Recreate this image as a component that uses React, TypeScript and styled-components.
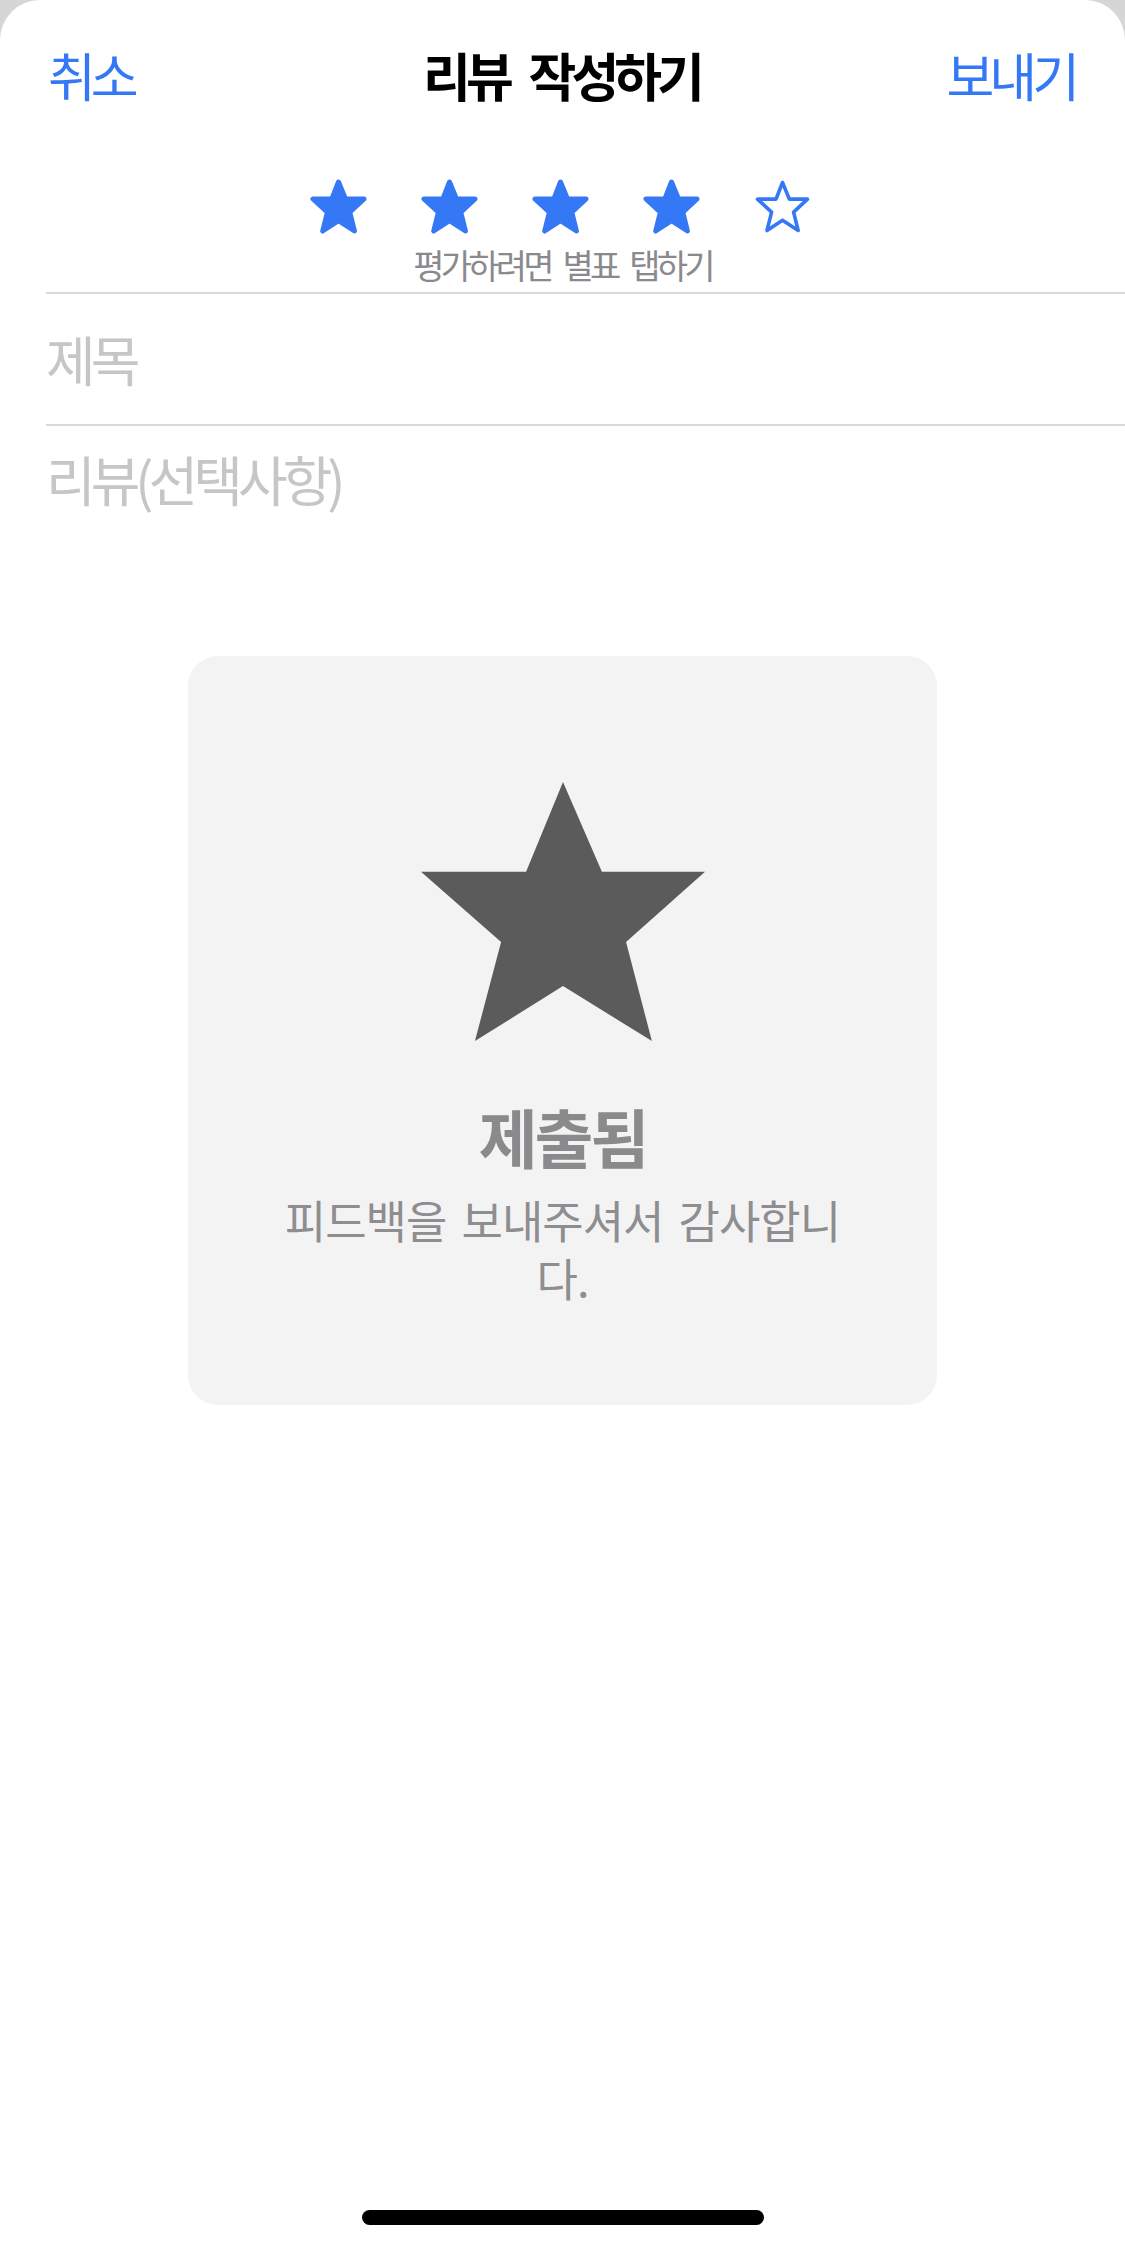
import React from "react";
import styled, { createGlobalStyle } from "styled-components";

const GlobalStyle = createGlobalStyle`
  html, body {
    margin: 0;
    padding: 0;
    background: #d6d6d6;
  }
  body {
    font-family: "Noto Sans CJK KR", "Noto Sans", sans-serif;
    -webkit-font-smoothing: antialiased;
  }
  * { box-sizing: border-box; }
`;

const Sheet = styled.div`
  width: 1125px;
  height: 2248px;
  background: #ffffff;
  border-radius: 40px 40px 0 0;
  display: flex;
  flex-direction: column;
  overflow: hidden;
`;

const NavBar = styled.header`
  height: 150px;
  padding: 0 50px 0 48px;
  display: grid;
  grid-template-columns: 1fr auto 1fr;
  align-items: center;
`;

const NavButton = styled.span<{ $align: "left" | "right" }>`
  font-size: 52px;
  line-height: 60px;
  letter-spacing: -5px;
  color: #3478f6;
  justify-self: ${(p) => (p.$align === "left" ? "start" : "end")};
  font-weight: 400;
`;

const NavTitle = styled.h1`
  margin: 0;
  font-size: 52px;
  line-height: 60px;
  font-weight: 700;
  letter-spacing: -5px;
  word-spacing: 13px;
  color: #000000;
`;

const RatingSection = styled.section`
  padding-top: 29px;
  display: flex;
  flex-direction: column;
  align-items: center;
`;

const StarRow = styled.div`
  display: flex;
  gap: 54px;
  margin-right: 4px;
`;

const Hint = styled.p`
  margin: 10px 0 0;
  font-size: 34px;
  line-height: 42px;
  letter-spacing: -3.8px;
  word-spacing: 8px;
  color: #8a8a8e;
`;

const Form = styled.div`
  margin-top: 6px;
  margin-left: 46px;
  display: flex;
  flex-direction: column;
`;

const Field = styled.div<{ $height?: number; $padTop?: number }>`
  border-top: 2px solid #d9d9dc;
  height: ${(p) => (p.$height ? `${p.$height}px` : "auto")};
  padding-top: ${(p) => p.$padTop ?? 0}px;
  display: flex;
  align-items: ${(p) => (p.$height ? "center" : "flex-start")};
`;

const Placeholder = styled.span`
  font-size: 54px;
  line-height: 64px;
  letter-spacing: -5px;
  color: #c6c6c9;
`;

const Card = styled.div`
  margin: 145px auto 0;
  width: 749px;
  height: 749px;
  border-radius: 30px;
  background: #f3f3f3;
  display: flex;
  flex-direction: column;
  align-items: center;
  padding-top: 126px;
`;

const CardTitle = styled.h2`
  margin: 58px 0 0;
  font-size: 64px;
  line-height: 72px;
  font-weight: 700;
  letter-spacing: -3px;
  color: #8a8a8d;
`;

const CardText = styled.p`
  margin: 20px 0 0;
  font-size: 45px;
  line-height: 58px;
  letter-spacing: -1px;
  word-spacing: 6px;
  text-align: center;
  color: #8e8e91;
`;

const HomeIndicator = styled.div`
  margin: auto auto 23px;
  width: 402px;
  height: 15px;
  border-radius: 8px;
  background: #000000;
`;

const pts: [number, number][] = [
  [0.5, 0],
  [0.637, 0.347],
  [1, 0.347],
  [0.722, 0.618],
  [0.813, 1],
  [0.5, 0.788],
  [0.19, 1],
  [0.282, 0.618],
  [0, 0.347],
  [0.37, 0.347],
];

const starPoints = (w: number, h: number, pad: number) =>
  pts.map(([x, y]) => `${(pad + x * w).toFixed(2)},${(pad + y * h).toFixed(2)}`).join(" ");

const SmallStar = ({ filled }: { filled: boolean }) => (
  <svg width="57" height="55" viewBox="0 0 57 55">
    <polygon
      points={starPoints(filled ? 51 : 50, filled ? 49 : 48, filled ? 3 : 3.5)}
      fill={filled ? "#3478f6" : "none"}
      stroke="#3478f6"
      strokeWidth={filled ? 5 : 3.6}
      strokeLinejoin="round"
    />
  </svg>
);

const BigStar = () => (
  <svg width="284" height="259" viewBox="0 0 284 259">
    <polygon points={starPoints(284, 259, 0)} fill="#5b5b5b" />
  </svg>
);

export default function App() {
  const rating = 4;
  return (
    <>
      <GlobalStyle />
      <Sheet>
        <NavBar>
          <NavButton $align="left">취소</NavButton>
          <NavTitle>리뷰 작성하기</NavTitle>
          <NavButton $align="right">보내기</NavButton>
        </NavBar>
        <RatingSection>
          <StarRow>
            {[1, 2, 3, 4, 5].map((i) => (
              <SmallStar key={i} filled={i <= rating} />
            ))}
          </StarRow>
          <Hint>평가하려면 별표 탭하기</Hint>
        </RatingSection>
        <Form>
          <Field $height={132}>
            <Placeholder>제목</Placeholder>
          </Field>
          <Field $padTop={21}>
            <Placeholder>리뷰(선택사항)</Placeholder>
          </Field>
        </Form>
        <Card>
          <BigStar />
          <CardTitle>제출됨</CardTitle>
          <CardText>
            피드백을 보내주셔서 감사합니
            <br />
            다.
          </CardText>
        </Card>
        <HomeIndicator />
      </Sheet>
    </>
  );
}
